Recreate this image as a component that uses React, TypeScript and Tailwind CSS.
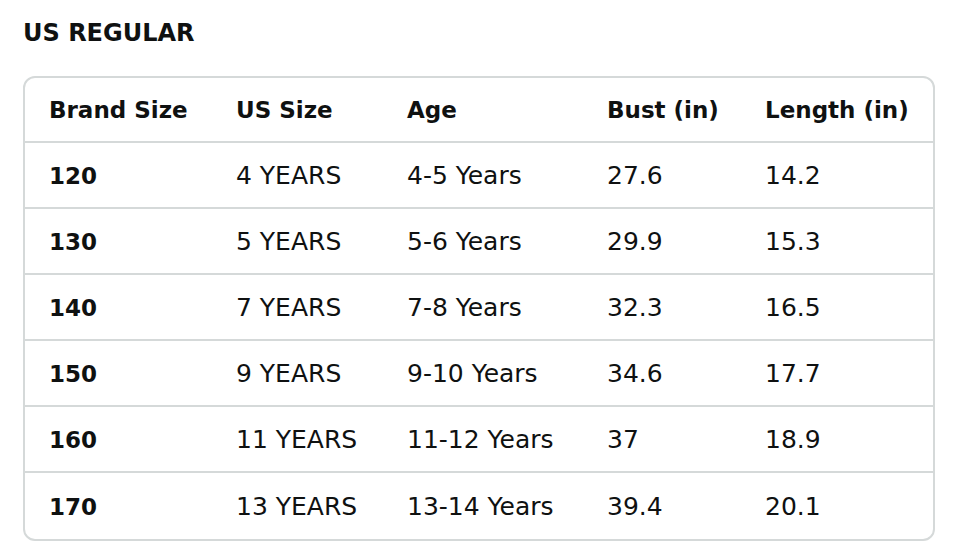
import React from 'react';

const rows = [
  ['120', '4 YEARS', '4-5 Years', '27.6', '14.2'],
  ['130', '5 YEARS', '5-6 Years', '29.9', '15.3'],
  ['140', '7 YEARS', '7-8 Years', '32.3', '16.5'],
  ['150', '9 YEARS', '9-10 Years', '34.6', '17.7'],
  ['160', '11 YEARS', '11-12 Years', '37', '18.9'],
  ['170', '13 YEARS', '13-14 Years', '39.4', '20.1'],
];

const headers = ['Brand Size', 'US Size', 'Age', 'Bust (in)', 'Length (in)'];
const widths = ['w-[187px]', 'w-[171px]', 'w-[200px]', 'w-[158px]', 'flex-1'];

export default function App() {
  return (
    <div className="w-[959px] h-[553px] bg-white text-[#0f1111] font-['DejaVu_Sans',sans-serif] pl-[23px] pr-[24px] pt-[15px]">
      <h2 className="text-[24px] font-bold leading-[36px]">US REGULAR</h2>
      <div className="mt-[25px] border-2 border-[#d5d9d9] rounded-[12px] overflow-hidden">
        <div className="flex items-center h-[65px] pt-[2px] border-b-2 border-[#d5d9d9] pl-[24px]">
          {headers.map((h, i) => (
            <div key={h} className={`${widths[i]} text-[23px] font-bold`}>{h}</div>
          ))}
        </div>
        {rows.map((r, ri) => (
          <div
            key={r[0]}
            className={`flex items-center h-[66px] pt-[2px] pl-[24px] ${ri < rows.length - 1 ? 'border-b-2 border-[#d5d9d9]' : ''}`}
          >
            {r.map((c, i) => (
              <div key={i} className={`${widths[i]} ${i === 0 ? 'text-[23px] font-bold' : 'text-[25px]'}`}>{c}</div>
            ))}
          </div>
        ))}
      </div>
    </div>
  );
}
